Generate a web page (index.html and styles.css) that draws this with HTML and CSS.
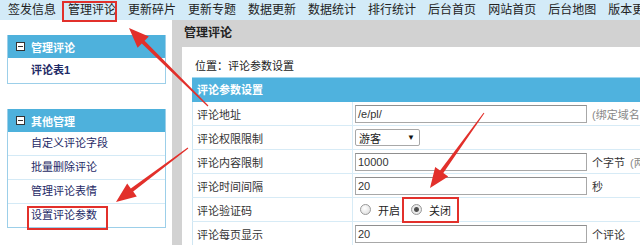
FILE: index.html
```html
<!DOCTYPE html>
<html>
<head>
  <meta charset="UTF-8">
  <title>管理评论</title>
  <link rel="stylesheet" href="styles.css">
</head>
<body>
  <div class="topnav">
    <a>签发信息</a>
    <a>管理评论</a>
    <a>更新碎片</a>
    <a>更新专题</a>
    <a>数据更新</a>
    <a>数据统计</a>
    <a>排行统计</a>
    <a>后台首页</a>
    <a>网站首页</a>
    <a>后台地图</a>
    <a>版本更新</a>
  </div>

  <div class="main">
    <div class="sidebar">
      <div class="menu">
        <div class="menu-head">
          <svg class="menu-icon" width="9" height="9" viewBox="0 0 9 9"><rect x="0.5" y="0.5" width="8" height="8" fill="#fff" stroke="#333"/><line x1="2" y1="4.5" x2="7" y2="4.5" stroke="#333"/></svg>
          管理评论
        </div>
        <a class="menu-item strong">评论表1</a>
      </div>

      <div class="menu">
        <div class="menu-head">
          <svg class="menu-icon" width="9" height="9" viewBox="0 0 9 9"><rect x="0.5" y="0.5" width="8" height="8" fill="#fff" stroke="#333"/><line x1="2" y1="4.5" x2="7" y2="4.5" stroke="#333"/></svg>
          其他管理
        </div>
        <a class="menu-item">自定义评论字段</a>
        <a class="menu-item">批量删除评论</a>
        <a class="menu-item">管理评论表情</a>
        <a class="menu-item">设置评论参数</a>
      </div>
    </div>

    <div class="content">
      <div class="content-title">管理评论</div>
      <div class="panel">
        <div class="location">位置：评论参数设置</div>
        <div class="table-head">评论参数设置</div>
        <table class="form-table">
          <tr>
            <td class="label">评论地址</td>
            <td><span class="field">/e/pl/</span><span class="note">(绑定域名的话请填写完整地址)</span></td>
          </tr>
          <tr>
            <td class="label">评论权限限制</td>
            <td><span class="select">游客<span class="caret">▼</span></span></td>
          </tr>
          <tr>
            <td class="label">评论内容限制</td>
            <td><span class="field">10000</span><span class="unit">个字节</span><span class="note">(两个字节为一个汉字)</span></td>
          </tr>
          <tr>
            <td class="label">评论时间间隔</td>
            <td><span class="field">20</span><span class="unit">秒</span></td>
          </tr>
          <tr>
            <td class="label">评论验证码</td>
            <td>
              <span class="radio"></span><span class="radio-text">开启</span>
              <span class="radio checked"></span><span class="radio-text">关闭</span>
            </td>
          </tr>
          <tr>
            <td class="label">评论每页显示</td>
            <td><span class="field">20</span><span class="unit">个评论</span></td>
          </tr>
        </table>
      </div>
    </div>
  </div>

  <!-- red annotation marks drawn over the screenshot -->
  <svg class="annotations" width="640" height="245" viewBox="0 0 640 245">
    <g fill="none" stroke="#e2302b" stroke-width="2">
      <rect x="63" y="2" width="53" height="19"/>
      <rect x="28" y="207" width="79" height="22"/>
      <rect x="403" y="198" width="55" height="24"/>
    </g>
    <g fill="#e2302b">
      <polygon points="129,28 148.8,36.4 144.6,40.7 208.4,105.6 207.6,106.4 141.8,43.5 137.6,47.8"/>
      <polygon points="116,202 127.2,183.6 130.8,188.4 187.7,147.6 188.3,148.4 133.2,191.6 136.8,196.4"/>
      <polygon points="430,188 435.2,167.1 440.1,170.6 483.6,112.7 484.4,113.3 443.3,173 448.2,176.5"/>
    </g>
  </svg>
</body>
</html>
```

FILE: styles.css
```css
html, body {
  margin: 0;
  padding: 0;
  width: 640px;
  height: 245px;
  overflow: hidden;
}

body {
  font-family: "Liberation Sans", "Noto Sans CJK SC", sans-serif;
  font-size: 11px;
  color: #333;
  background-color: #fff;
  position: relative;
}

.topnav {
  height: 20px;
  background-color: #d3ebf8;
  display: flex;
  gap: 12px;
  padding-left: 8px;
  white-space: nowrap;
  overflow: hidden;
}

.topnav a {
  font-size: 12px;
  line-height: 20px;
  color: #222;
  flex: none;
}

.main {
  display: flex;
  height: 225px;
}

.sidebar {
  width: 159px;
  flex: none;
  padding: 15px 6px 0 7px;
  background-color: #fff;
}

.menu {
  border: 1px solid #9ccfe9;
  border-top: none;
  margin-bottom: 25px;
}

.menu-head {
  height: 23px;
  display: flex;
  align-items: center;
  background-color: #4eb1dc;
  color: #fff;
  font-weight: bold;
  padding-left: 8px;
}

.menu-icon {
  margin-right: 6px;
}

.menu-item {
  display: block;
  height: 23px;
  line-height: 23px;
  padding-left: 23px;
  color: #1e2a66;
  border-top: 1px solid #d4eaf6;
}

.menu-item:first-of-type {
  border-top: none;
}

.menu-item.strong {
  font-weight: bold;
  height: 25px;
  line-height: 25px;
}

.content {
  flex: 1;
  background-color: #d2d2d2;
  display: flex;
  flex-direction: column;
  min-width: 0;
}

.content-title {
  height: 27px;
  line-height: 27px;
  padding-left: 12px;
  font-size: 12px;
  font-weight: bold;
  color: #222;
}

.panel {
  flex: 1;
  margin-left: 10px;
  background-color: #fff;
  padding: 11px 0 0 10px;
  overflow: hidden;
}

.location {
  height: 19px;
  line-height: 17px;
  padding-left: 3px;
  color: #222;
}

.table-head {
  height: 24px;
  line-height: 24px;
  border-top: 1px solid #a3d8f0;
  background-color: #4fb2de;
  color: #fff;
  font-weight: bold;
  padding-left: 5px;
  width: 600px;
}

.form-table {
  border-collapse: collapse;
  width: 600px;
  border-left: 1px solid #cfe6f3;
}

.form-table td {
  height: 23px;
  padding: 0 0 0 2px;
  border-bottom: 1px solid #d7ebf6;
  white-space: nowrap;
  vertical-align: middle;
}

.form-table td.label {
  width: 155px;
  padding-left: 4px;
  border-right: 1px solid #d7ebf6;
  color: #333;
}

.field {
  display: inline-block;
  vertical-align: middle;
  box-sizing: border-box;
  width: 232px;
  height: 18px;
  line-height: 16px;
  padding-left: 2px;
  border: 1px solid #a8a8a8;
  border-top-color: #8f8f8f;
  color: #333;
}

.unit {
  margin-left: 5px;
  vertical-align: middle;
  color: #333;
}

.note {
  margin-left: 5px;
  vertical-align: middle;
  color: #888;
}

.select {
  display: inline-flex;
  align-items: center;
  justify-content: space-between;
  box-sizing: border-box;
  width: 65px;
  height: 17px;
  padding: 0 4px 0 3px;
  border: 1px solid #a8a8a8;
  border-radius: 2px;
  vertical-align: middle;
  color: #222;
}

.caret {
  font-size: 8px;
  color: #111;
}

.radio {
  display: inline-block;
  box-sizing: border-box;
  width: 11px;
  height: 11px;
  margin-left: 5px;
  border: 1px solid #9a9a9a;
  border-radius: 50%;
  background: radial-gradient(circle at 40% 35%, #fff 0%, #e4e4e4 70%, #cfcfcf 100%);
  vertical-align: middle;
}

.radio.checked {
  margin-left: 8px;
  background: radial-gradient(circle, #444 0, #555 2px, #eee 3px, #d6d6d6 100%);
}

.radio-text {
  margin-left: 7px;
  vertical-align: middle;
  color: #222;
}

.annotations {
  position: absolute;
  left: 0;
  top: 0;
  pointer-events: none;
}
```
